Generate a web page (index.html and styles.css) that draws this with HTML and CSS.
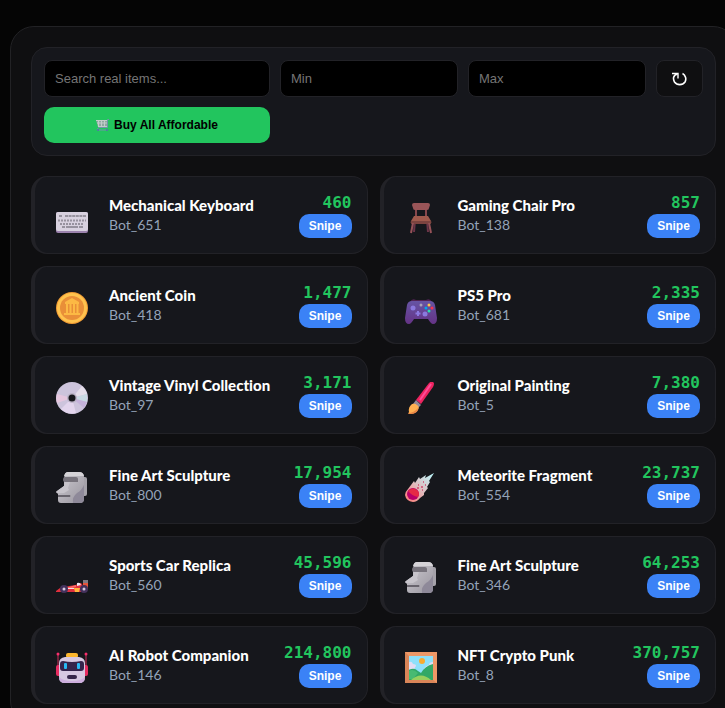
FILE: index.html
```html
<!DOCTYPE html>
<html lang="en">
<head>
  <meta charset="UTF-8">
  <meta name="viewport" content="width=device-width, initial-scale=1.0">
  <title>Market</title>
  <link rel="stylesheet" href="styles.css">
</head>
<body>
  <!-- moai is used by two items -->
  <svg class="defs" aria-hidden="true">
    <defs>
      <linearGradient id="stone" x1="0" y1="0" x2="1" y2="1">
        <stop offset="0" stop-color="#d0ced3"/>
        <stop offset="1" stop-color="#99959f"/>
      </linearGradient>
      <symbol id="moai" viewBox="0 0 32 32">
        <path d="M26 5h3q2 0 2 2v15q0 2-2 2h-3z" fill="#a5a2aa"/>
        <path d="M12 0h11q5 0 5 5v22q0 4-4 4H5q-3 0-3-3v-6l-1-1q-2-1 0-2l7-5V6l1-4q1-2 3-2z" fill="url(#stone)"/>
        <path d="M12 0h11q4 0 5 4H8q1-4 4-4z" fill="#d5d3d7"/>
        <path d="M9 5h11q2 0 2 2v3H9q-2 0-2-2 0-3 2-3z" fill="#77737c"/>
        <path d="M9 10h5l-2 6 1 2-5 3H1q-1-1 0-2l7-5z" fill="#c7c4cb"/>
        <path d="M28 13v14q0 4-4 4h-7q-1-6 4-10 5-3 7-8z" fill="#8e8999"/>
        <path d="M2 23h12q1 1 0 2H2z" fill="#68646d"/>
      </symbol>
    </defs>
  </svg>

  <div class="panel">
    <form class="filters">
      <input type="text" placeholder="Search real items..." aria-label="Search real items">
      <input type="number" placeholder="Min" aria-label="Min">
      <input type="number" placeholder="Max" aria-label="Max">
      <button type="button" class="refresh" aria-label="Refresh">
        <svg width="15" height="14" viewBox="0 0 15 14" fill="none" stroke="#fff">
          <path d="M0 1.500h6v5" stroke-width="1.400"/>
          <path d="M5.500 2C1 3 .8 7 2.500 10c2.500 3.500 8 3.500 10.500 0C14.700 7 13.500 3 10.500 1.500" stroke-width="1.600"/>
        </svg>
      </button>
      <button type="button" class="buy-all">
        <svg width="13" height="12" viewBox="0 0 13 12">
          <path d="M0 1h11v7H2z" fill="#8fa9a0"/>
          <path d="M0 1.500h11M1 4h10M2 7.500h9M2.500 1v6M5.500 1v6M8.500 1v6" stroke="#c3ccca" fill="none"/>
          <path d="M13 .5h-1.500v8H2.500L1 11h11" stroke="#6f95a8" fill="none"/>
          <circle cx="2" cy="11" r="1" fill="#4b75a8"/>
          <circle cx="11" cy="11" r="1" fill="#4b75a8"/>
        </svg>
        Buy All Affordable
      </button>
    </form>

    <div class="market">
      <div class="item">
        <div class="icon">
          <svg viewBox="0 0 32 32">
            <rect y="10" width="32" height="21" rx="2" fill="#9b82ad"/>
            <rect y="10" width="32" height="19" rx="2" fill="#d8d1df"/>
            <g stroke="#97929e" stroke-width="2" fill="none">
              <path d="M3 14h3M9 14h21" stroke-dasharray="3 .6"/>
              <path d="M2 18.500h28M4 22h24" stroke-dasharray="2 1"/>
              <path d="M6 25h3M10 25h12M23 25h4"/>
            </g>
          </svg>
        </div>
        <div class="info">
          <div class="name">Mechanical Keyboard</div>
          <div class="seller">Bot_651</div>
        </div>
        <div class="buy">
          <div class="price">460</div>
          <button type="button" class="snipe">Snipe</button>
        </div>
      </div>

      <div class="item">
        <div class="icon">
          <svg viewBox="0 0 32 32">
            <path d="M10 18l-1 12M22 18l1 12" stroke="#6b3448" stroke-width="2"/>
            <path d="M11 7v8M21 7v8" stroke="#86474c" stroke-width="2"/>
            <path d="M9 1h14q2 0 2 2l-1 3q0 2-2 2H10q-2 0-2-2L7 3q0-2 2-2z" fill="#9a5558"/>
            <path d="M9 14h14l3 5q1 3-2 3H8q-3 0-2-3z" fill="#a05a4d"/>
            <path d="M6 19h20q1 3-2 3H8q-3 0-2-3z" fill="#7c433f"/>
            <path d="M8 21L6 31M24 21l2 10" stroke="#965258" stroke-width="2"/>
          </svg>
        </div>
        <div class="info">
          <div class="name">Gaming Chair Pro</div>
          <div class="seller">Bot_138</div>
        </div>
        <div class="buy">
          <div class="price">857</div>
          <button type="button" class="snipe">Snipe</button>
        </div>
      </div>

      <div class="item">
        <div class="icon">
          <svg viewBox="0 0 32 32">
            <circle cx="16" cy="16" r="16" fill="#f09b35"/>
            <circle cx="16" cy="16" r="15" fill="#ffc34e"/>
            <circle cx="16" cy="16" r="12" fill="#e98f38"/>
            <path d="M9 10l7-4 7 4v2H9zM10 12h2v9h-2zM13.500 12h2v9h-2zM17 12h2v9h-2zM20.500 12h2v9h-2zM8 21h16v2H8z" fill="#fcb944"/>
          </svg>
        </div>
        <div class="info">
          <div class="name">Ancient Coin</div>
          <div class="seller">Bot_418</div>
        </div>
        <div class="buy">
          <div class="price">1,477</div>
          <button type="button" class="snipe">Snipe</button>
        </div>
      </div>

      <div class="item">
        <div class="icon">
          <svg viewBox="0 0 32 32">
            <defs>
              <linearGradient id="pad" x1="0" y1="0" x2="0" y2="1">
                <stop offset="0" stop-color="#6654a4"/>
                <stop offset="1" stop-color="#653386"/>
              </linearGradient>
            </defs>
            <path d="M5 10q2-4 6-2h10q4-2 6 2z" fill="#512254"/>
            <path d="M7 9h18q4 0 5 4l2 13q0 6-4 6-2 0-5-5H9q-3 5-5 5-4 0-4-6l2-13q1-4 5-4z" fill="url(#pad)"/>
            <circle cx="8" cy="16" r="2.500" fill="#8b79df"/>
            <circle cx="20" cy="22" r="2.500" fill="#8b79df"/>
            <path d="M13 19v5M10.500 21.500h5" stroke="#8b79df" stroke-width="2"/>
            <circle cx="16" cy="13" r="1.500" fill="#aaa1b8"/>
            <circle cx="24" cy="13" r="1.500" fill="#ffc448"/>
            <circle cx="21" cy="16" r="1.500" fill="#00a9ed"/>
            <circle cx="27" cy="16" r="1.500" fill="#f7364f"/>
            <circle cx="24" cy="19" r="1.500" fill="#29dfb0"/>
          </svg>
        </div>
        <div class="info">
          <div class="name">PS5 Pro</div>
          <div class="seller">Bot_681</div>
        </div>
        <div class="buy">
          <div class="price">2,335</div>
          <button type="button" class="snipe">Snipe</button>
        </div>
      </div>

      <div class="item">
        <div class="icon">
          <svg viewBox="0 0 32 32">
            <circle cx="16" cy="16" r="16" fill="#cdc4dc"/>
            <path d="M16 16L26 4a16 16 0 0 1 5 8z" fill="#e5deea"/>
            <path d="M16 16L1 12a16 16 0 0 0 0 9z" fill="#e6c7df"/>
            <path d="M16 16l15-4v8z" fill="#c9d9e3"/>
            <path d="M16 16l15 4-3 6z" fill="#c5b2da"/>
            <path d="M16 16L5 27a16 16 0 0 0 15 4z" fill="#e3d5ed"/>
            <circle cx="16" cy="16" r="5" fill="#bbb3c6"/>
            <circle cx="16" cy="16" r="3.500" fill="#18191d"/>
          </svg>
        </div>
        <div class="info">
          <div class="name">Vintage Vinyl Collection</div>
          <div class="seller">Bot_97</div>
        </div>
        <div class="buy">
          <div class="price">3,171</div>
          <button type="button" class="snipe">Snipe</button>
        </div>
      </div>

      <div class="item">
        <div class="icon">
          <svg viewBox="0 0 32 32">
            <path d="M24 1q2-2 4-1 2 1 0 5L16 22l-5-4z" fill="#ed245f"/>
            <path d="M26 2L15 18" stroke="#ff4b99" stroke-width="2"/>
            <path d="M11 18l5 5-4 4-4-5z" fill="#938897"/>
            <path d="M7 22q3-1 5 1 3 2 1 5-2 4-9 4-1-1 0-2-1-5 3-8z" fill="#ffb052"/>
            <path d="M3 31q6 0 10-5 0 6-8 6-2 0-2-1z" fill="#e98546"/>
          </svg>
        </div>
        <div class="info">
          <div class="name">Original Painting</div>
          <div class="seller">Bot_5</div>
        </div>
        <div class="buy">
          <div class="price">7,380</div>
          <button type="button" class="snipe">Snipe</button>
        </div>
      </div>

      <div class="item">
        <div class="icon"><svg><use href="#moai"/></svg></div>
        <div class="info">
          <div class="name">Fine Art Sculpture</div>
          <div class="seller">Bot_800</div>
        </div>
        <div class="buy">
          <div class="price">17,954</div>
          <button type="button" class="snipe">Snipe</button>
        </div>
      </div>

      <div class="item">
        <div class="icon">
          <svg viewBox="0 0 32 32">
            <defs>
              <linearGradient id="tail" x1="0" y1="1" x2="1" y2="0">
                <stop offset="0" stop-color="#ff7771"/>
                <stop offset=".5" stop-color="#dfbec1"/>
                <stop offset="1" stop-color="#b9fbff"/>
              </linearGradient>
            </defs>
            <path d="M3 17L9 9l1 2 4-6 1 2 6-4-1 3 9-5-5 8 1 1-3 5 1 1-4 5v2l-4 3q-3 4-7 4-7-1-8-7 0-3 3-6z" fill="url(#tail)"/>
            <path d="M13 13h1M18 10h1M16 15h2M12 16h2M20 13h1M17 18h1" stroke="#cd486d" stroke-width="1.500"/>
            <circle cx="8" cy="22" r="6" fill="#b90068"/>
            <path d="M3 19q5-5 10 0 2 3 0 6-6-1-10-6z" fill="#e52a45"/>
          </svg>
        </div>
        <div class="info">
          <div class="name">Meteorite Fragment</div>
          <div class="seller">Bot_554</div>
        </div>
        <div class="buy">
          <div class="price">23,737</div>
          <button type="button" class="snipe">Snipe</button>
        </div>
      </div>

      <div class="item">
        <div class="icon">
          <svg viewBox="0 0 32 32">
            <path d="M27 18h5v3h-5z" fill="#7f7882"/>
            <path d="M27 21h5v6h-5z" fill="#e65439"/>
            <path d="M0 29l4-3 9-2 7-1 2-2h3l3 4 3 1v4H0z" fill="#df2f3d"/>
            <path d="M5 25h8l7-2v2l-8 2z" fill="#ff6b64"/>
            <path d="M12 26h6v1h-6z" fill="#f4dfe3"/>
            <path d="M18 26h6l-1 4h-4z" fill="#ffb43c"/>
            <path d="M21 21q3-1 4 2l-4 1z" fill="#ece7f1"/>
            <circle cx="8" cy="27" r="4" fill="#43315c"/>
            <circle cx="28" cy="27" r="4" fill="#43315c"/>
            <circle cx="8" cy="27" r="1.500" fill="#d7c9df"/>
            <circle cx="28" cy="27" r="1.500" fill="#d7c9df"/>
          </svg>
        </div>
        <div class="info">
          <div class="name">Sports Car Replica</div>
          <div class="seller">Bot_560</div>
        </div>
        <div class="buy">
          <div class="price">45,596</div>
          <button type="button" class="snipe">Snipe</button>
        </div>
      </div>

      <div class="item">
        <div class="icon"><svg><use href="#moai"/></svg></div>
        <div class="info">
          <div class="name">Fine Art Sculpture</div>
          <div class="seller">Bot_346</div>
        </div>
        <div class="buy">
          <div class="price">64,253</div>
          <button type="button" class="snipe">Snipe</button>
        </div>
      </div>

      <div class="item">
        <div class="icon">
          <svg viewBox="0 0 32 32">
            <path d="M2 2v14M30 2v14" stroke="#cb315b"/>
            <circle cx="2" cy="2" r="1.500" fill="#f92e6c"/>
            <circle cx="30" cy="2" r="1.500" fill="#f92e6c"/>
            <rect y="13" width="6" height="11" rx="2" fill="#e72c61"/>
            <rect x="26" y="13" width="6" height="11" rx="2" fill="#e72c61"/>
            <rect x="10" y="1" width="12" height="5" rx="2" fill="#fdb72e"/>
            <path d="M9 5h14q6 1 6 6v14q0 6-6 6H9q-6 0-6-6V11q0-5 6-6z" fill="#d7c8e2"/>
            <path d="M3 25q4 4 13 4t13-4q0 6-6 6H9q-6 0-6-6z" fill="#cdaede"/>
            <path d="M7 9q9 2 18 0 3 0 3 3v4q0 3-3 3H7q-3 0-3-3v-4q0-3 3-3z" fill="#35244c"/>
            <rect x="8" y="11" width="3" height="6" rx="1" fill="#29b8f4"/>
            <rect x="21" y="11" width="3" height="6" rx="1" fill="#29b8f4"/>
            <rect x="11" y="23" width="10" height="4" rx="2" fill="#37264b"/>
          </svg>
        </div>
        <div class="info">
          <div class="name">AI Robot Companion</div>
          <div class="seller">Bot_146</div>
        </div>
        <div class="buy">
          <div class="price">214,800</div>
          <button type="button" class="snipe">Snipe</button>
        </div>
      </div>

      <div class="item">
        <div class="icon">
          <svg viewBox="0 0 32 32">
            <path d="M0 0h32v31H0z" fill="#ee9867"/>
            <path d="M0 0l4 4v24l-4 3zM0 31l4-3h24l4 3z" fill="#d98558"/>
            <path d="M4 4h24v24H4z" fill="#8ee0fa"/>
            <path d="M4 10q3-1 4 2 3 0 3 2l-2 3H4zM28 10q-4 0-4 3-4 1-5 4h9z" fill="#e2dcf3"/>
            <path d="M4 18q5-3 9 1l3 2q4-7 12-9v16H4z" fill="#32a866"/>
            <path d="M4 19q4-3 9 2l-5 6H4z" fill="#47ba72"/>
            <path d="M6 28q10-9 20 0z" fill="#98cf5d"/>
            <circle cx="17" cy="9" r="3" fill="#f9aa2e"/>
          </svg>
        </div>
        <div class="info">
          <div class="name">NFT Crypto Punk</div>
          <div class="seller">Bot_8</div>
        </div>
        <div class="buy">
          <div class="price">370,757</div>
          <button type="button" class="snipe">Snipe</button>
        </div>
      </div>
    </div>
  </div>
</body>
</html>
```
FILE: styles.css
```css
* {
  box-sizing: border-box;
}

body {
  margin: 0;
  padding-top: 26px;
  background: #050505;
  color: #fff;
  font-family: Lato, Inter, sans-serif;
  font-variant-ligatures: none;
  overflow: hidden;
}

.defs {
  position: absolute;
  width: 0;
  height: 0;
}

/* the panel runs past the right side of the window */
.panel {
  margin: 0 -12px 0 10px;
  padding: 20px;
  background: #0f0f11;
  border: 1px solid #222225;
  border-radius: 24px;
}

.filters {
  display: grid;
  grid-template-columns: 2fr minmax(178px, 1fr) minmax(178px, 1fr) auto;
  gap: 10px;
  padding: 12px;
  margin-bottom: 20px;
  background: #16171c;
  border: 1px solid #222227;
  border-radius: 16px;
}

.filters input {
  width: 100%;
  min-width: 0;
  height: 37px;
  padding: 10px;
  background: #000;
  color: #fff;
  border: 1px solid #222227;
  border-radius: 8px;
  font-family: "Liberation Sans", Arial, sans-serif;
  font-size: 13px;
}
.filters input::placeholder {
  color: #757575;
}

.refresh {
  display: flex;
  align-items: center;
  justify-content: center;
  width: 47px;
  padding: 0;
  background: #0f0f11;
  border: 1px solid #222227;
  border-radius: 8px;
}

.buy-all {
  display: flex;
  align-items: center;
  justify-content: center;
  gap: 5px;
  height: 36px;
  padding: 0;
  background: #22c55e;
  color: #000;
  border: none;
  border-radius: 10px;
  font-family: "Liberation Sans", Arial, sans-serif;
  font-size: 12px;
  font-weight: bold;
}

.market {
  display: grid;
  grid-template-columns: 1fr 1fr;
  gap: 12px;
}

.item {
  display: flex;
  align-items: center;
  gap: 15px;
  padding: 15px;
  background: #16171c;
  border: 1px solid #222227;
  border-left-width: 4px;
  border-radius: 16px;
}

.icon {
  width: 44px;
  padding-top: 6px;
}
.icon svg {
  display: block;
  width: 32px;
  height: 32px;
  margin: 0 auto;
}

.info {
  flex: 1;
  line-height: 20px;
}
.name {
  font-size: 15px;
  font-weight: 900;
}
.seller {
  color: #94a3b8;
  font-size: 14px;
}

.buy {
  text-align: right;
}
.price {
  color: #22c55e;
  font-family: "DejaVu Sans Mono", monospace;
  font-size: 16px;
  font-weight: bold;
  line-height: 22px;
}
.snipe {
  display: block;
  width: 53px;
  height: 24px;
  margin-left: auto;
  padding: 0;
  background: #3b82f6;
  color: #fff;
  border: none;
  border-radius: 10px;
  font-family: "Liberation Sans", Arial, sans-serif;
  font-size: 12px;
  font-weight: bold;
}
```
